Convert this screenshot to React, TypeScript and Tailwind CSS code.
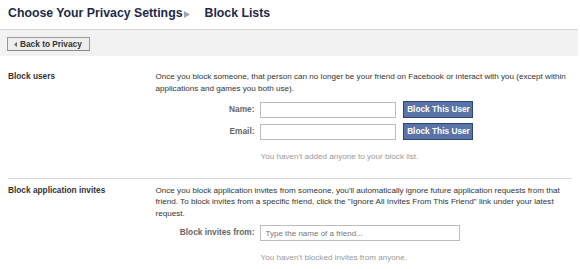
import React from "react";

function FormLabel({ children }: { children: React.ReactNode }) {
  return (
    <div className="w-[99px] text-right text-[8.3px] font-bold text-[#666]">{children}</div>
  );
}

function BlockButton() {
  return (
    <button className="ml-[7px] h-[17px] w-[70px] border border-[#29447e] bg-[#5b74a8] text-[8.3px] font-bold text-white leading-none">
      Block This User
    </button>
  );
}

export default function App() {
  return (
    <div className="w-[580px] h-[269px] overflow-hidden bg-white font-['Liberation_Sans',Arial,sans-serif] text-[#333]">
      {/* header */}
      <div className="flex h-[29px] items-center pl-[8px] pb-[3px] text-[12.3px] font-bold text-[#1c2a47]">
        <span>Choose Your Privacy Settings</span>
        <svg width="6" height="7" viewBox="0 0 6 7" className="ml-[1px] mt-[2px]">
          <path d="M0 0 L6 3.5 L0 7 Z" fill="#a0a4ad" />
        </svg>
        <span className="ml-[15px]">Block Lists</span>
      </div>

      <div className="h-[27px] w-[578px] border-t border-[#d4d4d4] bg-[#f2f2f2] pl-[7px] pt-[7px]">
        <button className="flex h-[14px] w-[83px] items-center border border-[#999] border-b-[#888] bg-[#eee] pl-[6px] text-[8.3px] font-bold text-[#333] leading-none">
          <svg width="3" height="5" viewBox="0 0 3 5" className="mr-[3px]">
            <path d="M3 0 L0 2.5 L3 5 Z" fill="#666" />
          </svg>
          Back to Privacy
        </button>
      </div>

      <div className="px-[8px] text-[8.1px] leading-[11.5px]">
        {/* block users */}
        <div className="flex pt-[15px] pb-[15px] border-b border-[#d9d9d9]">
          <div className="w-[148px] text-[8.3px] font-bold">Block users</div>
          <div className="w-[418px]">
            <p>
              Once you block someone, that person can no longer be your friend on Facebook or interact with you (except within
              applications and games you both use).
            </p>
            <div className="mt-[7px] flex flex-col gap-[5px]">
              <div className="flex items-center">
                <FormLabel>Name:</FormLabel>
                <input className="ml-[6px] h-[16px] w-[136px] border border-[#bdbdbd] bg-white" />
                <BlockButton />
              </div>
              <div className="flex items-center">
                <FormLabel>Email:</FormLabel>
                <input className="ml-[6px] h-[16px] w-[136px] border border-[#bdbdbd] bg-white" />
                <BlockButton />
              </div>
            </div>
            <p className="mt-[11px] pl-[105px] text-[#999]">You haven't added anyone to your block list.</p>
          </div>
        </div>

        {/* block application invites */}
        <div className="flex pt-[6px]">
          <div className="w-[148px] text-[8.3px] font-bold">Block application invites</div>
          <div className="w-[418px]">
            <p>
              Once you block application invites from someone, you'll automatically ignore future application requests from that
              friend. To block invites from a specific friend, click the "Ignore All Invites From This Friend" link under your latest
              request.
            </p>
            <div className="mt-[6px] flex items-center">
              <FormLabel>Block invites from:</FormLabel>
              <input
                placeholder="Type the name of a friend..."
                className="ml-[6px] h-[16px] w-[200px] border border-[#bdbdbd] bg-white px-[4px] text-[8px] placeholder:text-[#777]"
              />
            </div>
            <p className="mt-[11px] pl-[105px] text-[#999]">You haven't blocked invites from anyone.</p>
          </div>
        </div>
      </div>
    </div>
  );
}
